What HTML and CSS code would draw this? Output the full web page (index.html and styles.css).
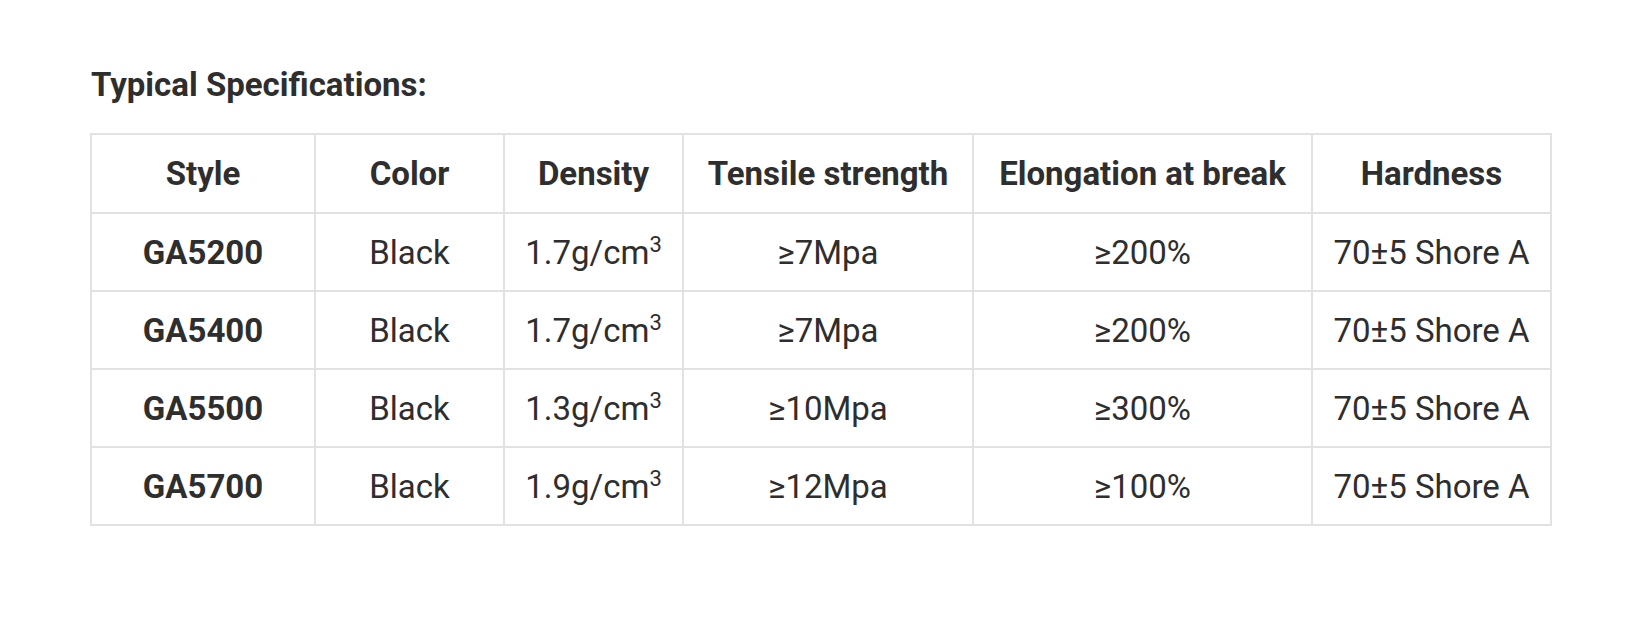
FILE: index.html
```html
<!DOCTYPE html>
<html>
<head>
<meta charset="utf-8">
<link rel="stylesheet" href="styles.css">
</head>
<body>
<div class="page">
  <h2 class="title">Typical Specifications:</h2>
  <table class="spec">
    <colgroup>
      <col class="c1"><col class="c2"><col class="c3"><col class="c4"><col class="c5"><col class="c6">
    </colgroup>
    <thead>
      <tr><th>Style</th><th>Color</th><th>Density</th><th>Tensile strength</th><th>Elongation at break</th><th>Hardness</th></tr>
    </thead>
    <tbody>
      <tr><td class="b">GA5200</td><td>Black</td><td>1.7g/cm<sup>3</sup></td><td>≥7Mpa</td><td>≥200%</td><td>70±5 Shore A</td></tr>
      <tr><td class="b">GA5400</td><td>Black</td><td>1.7g/cm<sup>3</sup></td><td>≥7Mpa</td><td>≥200%</td><td>70±5 Shore A</td></tr>
      <tr><td class="b">GA5500</td><td>Black</td><td>1.3g/cm<sup>3</sup></td><td>≥10Mpa</td><td>≥300%</td><td>70±5 Shore A</td></tr>
      <tr><td class="b">GA5700</td><td>Black</td><td>1.9g/cm<sup>3</sup></td><td>≥12Mpa</td><td>≥100%</td><td>70±5 Shore A</td></tr>
    </tbody>
  </table>
</div>
</body>
</html>
```
FILE: styles.css
```css
html, body {
  margin: 0;
  padding: 0;
  background: #ffffff;
}
body {
  font-family: Roboto, "Liberation Sans", sans-serif;
  color: #2e2e2e;
}
.page {
  padding: 66px 0 0 90px;
}
.title {
  margin: 0 0 29px 1px;
  font-size: 33px;
  line-height: 38px;
  font-weight: 700;
  color: #2e2e2e;
}
.spec {
  border-collapse: collapse;
  table-layout: fixed;
  width: 1460px;
  font-size: 33px;
}
.c1 { width: 224px; }
.c2 { width: 189px; }
.c3 { width: 179px; }
.c4 { width: 290px; }
.c5 { width: 339px; }
.c6 { width: 239px; }
.spec th, .spec td {
  border: 2px solid #e2e2e2;
  text-align: center;
  vertical-align: middle;
  padding: 0;
  white-space: nowrap;
}
.spec th {
  height: 77px;
  font-weight: 700;
}
.spec td {
  height: 76px;
  font-weight: 400;
}
.spec td.b {
  font-weight: 700;
}
.spec sup {
  font-size: 22px;
  line-height: 0;
  vertical-align: 0.55em;
}
```
